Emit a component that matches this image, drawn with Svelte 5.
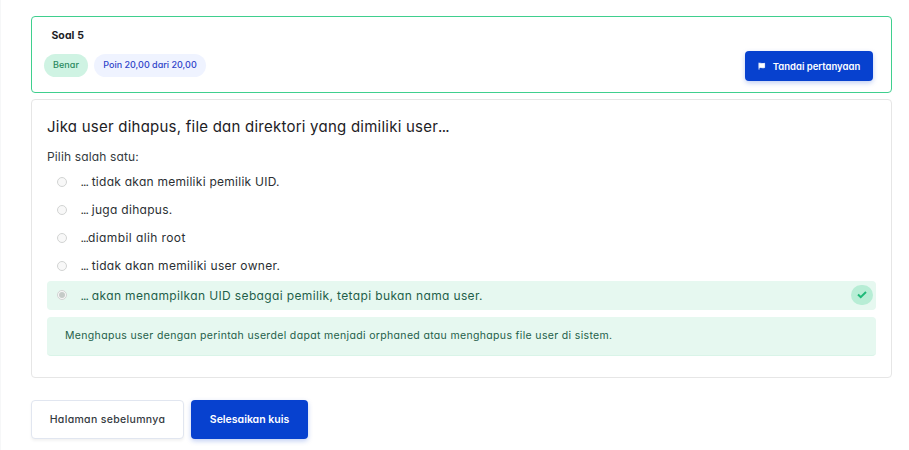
<script>
  const options = [
    { text: ' tidak akan memiliki pemilik UID.', ls: 0.26 },
    { text: ' juga dihapus.', ls: 0.3 },
    { text: 'diambil alih root', ls: 0.4 },
    { text: ' tidak akan memiliki user owner.', ls: 0.31 },
    { text: ' akan menampilkan UID sebagai pemilik, tetapi bukan nama user.', ls: 0.365, correct: true }
  ];
</script>

<main>
  <section class="info">
    <div class="summary">
      <h3>Soal 5</h3>
      <div class="badges">
        <span class="badge ok">Benar</span>
        <span class="badge grade">Poin 20,00 dari 20,00</span>
      </div>
    </div>
    <button class="flag">
      <svg width="8" height="8" viewBox="0 0 8 8"><path d="M1 .6V7.6M1.3 1.4C3 .9 4 2.1 6.6 1.3V5.6C4.5 6.3 3 5 1.3 5.7Z" fill="#fff" stroke="#fff" stroke-width=".8" /></svg>
      <span>Tandai pertanyaan</span>
    </button>
  </section>

  <section class="question">
    <h2>Jika user dihapus, file dan direktori yang dimiliki user<span class="dots">...</span></h2>
    <p class="prompt">Pilih salah satu:</p>
    <div class="answers">
      {#each options as o}
        <label class:correct={o.correct}>
          <i class="radio" class:on={o.correct}></i>
          <span class="txt" style:letter-spacing="{o.ls}px"><span class="dots">...</span>{o.text}</span>
          {#if o.correct}
            <b class="check"><svg width="10" height="8" viewBox="0 0 10 8"><path d="M1 3.6L3.7 6.1L9 1" fill="none" stroke="#1fb978" stroke-width="2" /></svg></b>
          {/if}
        </label>
      {/each}
    </div>
    <div class="feedback">Menghapus user dengan perintah userdel dapat menjadi orphaned atau menghapus file user di sistem.</div>
  </section>

  <nav>
    <button class="prev">Halaman sebelumnya</button>
    <button class="finish">Selesaikan kuis</button>
  </nav>
</main>

<style>
  :global(body) { background: #fff; overflow: hidden; }
  main {
    box-sizing: border-box; width: 909px; height: 450px; padding: 16px 17px 0 30px;
    border-left: 1px solid #f6f7f8; background: #fff; color: #1d2125;
    font-family: Inter, "Open Sans", sans-serif; font-feature-settings: "cv11";
    white-space: nowrap;
  }
  section, button, label, .feedback, .badge { box-sizing: border-box; }
  h2, h3, p { margin: 0; font-weight: 400; }
  button { font: inherit; padding: 0; border: 0; border-radius: 4px; display: flex; align-items: center; justify-content: center; font-feature-settings: "cv11"; }
  .info { height: 77px; border: 1px solid #3fcf8e; border-radius: 4px; padding: 10px 18px 11px 12px; display: flex; justify-content: space-between; align-items: flex-end; }
  .summary { height: 100%; width: 300px; }
  h3 { padding-left: 7.4px; height: 17px; line-height: 17px; font-size: 10.5px; font-weight: 650; letter-spacing: .1px; }
  .badges { display: flex; gap: 6px; margin-top: 10px; }
  .badge { height: 23px; border-radius: 12px; display: flex; align-items: center; justify-content: center; font-size: 9px; font-weight: 500; padding-bottom: 2px; }
  .ok { width: 44px; background: #cff3e3; color: #2b8a60; letter-spacing: .1px; }
  .grade { width: 112px; background: #eff3ff; color: #3044c9; }
  .flag { width: 128px; height: 30px; gap: 7px; background: #0741cf; color: #fff; font-size: 9.5px; font-weight: 600; box-shadow: 0 2px 5px #0741cf40; }
  .question { margin-top: 6px; height: 279px; border: 1px solid #e6e6e6; border-radius: 4px; padding: 16px 15px 0; }
  h2 { height: 22px; line-height: 22px; font-size: 15px; letter-spacing: .235px; }
  h2 .dots { letter-spacing: -.7px; }
  .prompt { margin-top: 9px; height: 20px; line-height: 20px; font-size: 12px; color: #343a40; letter-spacing: .15px; }
  .answers { margin-top: 1px; }
  label { display: flex; align-items: center; height: 28px; padding-left: 10px; font-size: 12px; color: #2b2f33; }
  .txt { white-space: pre; padding-bottom: 2px; }
  .txt .dots { letter-spacing: -.95px; }
  label.correct { height: 29px; margin-top: 1px; background: #e6f8f0; border-radius: 4px; color: #1f5f4a; padding-right: 3px; }
  .correct .txt { padding-bottom: 0; }
  .radio { box-sizing: border-box; width: 10px; height: 10px; border: 1px solid #d2d4d3; border-radius: 50%; background: #f8f8f8; margin: 0 13.5px 1px 0; display: flex; align-items: center; justify-content: center; }
  .radio.on::after { content: ""; width: 6px; height: 6px; border-radius: 50%; background: #c5cbc8; }
  .check { margin: 0 0 1px auto; width: 22px; height: 20px; border-radius: 11px; background: #b7edd5; display: flex; align-items: center; justify-content: center; }
  .feedback { margin-top: 7px; height: 39px; padding: 0 18px 2px; display: flex; align-items: center; background: #e6f8f0; border-bottom: 1px solid #d9f4e8; border-radius: 4px; font-size: 10.5px; color: #1f5f4a; letter-spacing: .34px; }
  nav { display: flex; gap: 7px; margin-top: 22px; }
  nav button { height: 39px; font-size: 10.5px; padding-bottom: 1px; }
  .prev { width: 153px; border: 1px solid #e1e6f0; background: #fff; color: #343a40; font-weight: 500; letter-spacing: .33px; box-shadow: 0 2px 3px #0000000d; }
  .finish { width: 117px; background: #0741cf; color: #fff; font-weight: 600; box-shadow: 0 2px 5px #0741cf40; }
</style>
